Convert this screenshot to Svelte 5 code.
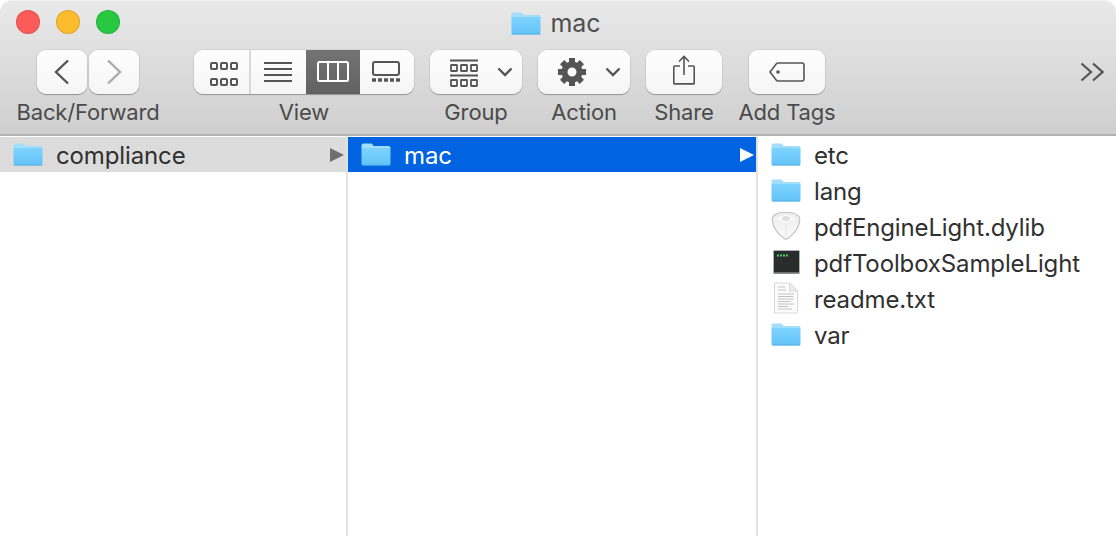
<script lang="ts">
  const viewModes = ['icons', 'list', 'columns', 'gallery'];
  const gearTeeth = [0, 45, 90, 135, 180, 225, 270, 315];
  const files = [
    { name: 'etc', kind: 'folder' },
    { name: 'lang', kind: 'folder' },
    { name: 'pdfEngineLight.dylib', kind: 'dylib' },
    { name: 'pdfToolboxSampleLight', kind: 'exec' },
    { name: 'readme.txt', kind: 'text' },
    { name: 'var', kind: 'folder' }
  ];
</script>

{#snippet folder()}
  <svg class="file-icon" width="30" height="26" viewBox="0 0 30 26">
    <defs>
      <linearGradient id="folderBody" x1="0" y1="0" x2="0" y2="1">
        <stop offset="0" stop-color="#7fd3fe" />
        <stop offset="1" stop-color="#62c3f8" />
      </linearGradient>
    </defs>
    <path d="M0.5 4.5a2 2 0 0 1 2-2h7.5c1.2 0 1.6 1.2 2.6 2.4h14.9a2 2 0 0 1 2 2v1H0.5z" fill="#a3def9" />
    <path d="M0.5 7h29v15.5a2 2 0 0 1-2 2h-25a2 2 0 0 1-2-2z" fill="url(#folderBody)" />
    <path d="M0.5 24h29" stroke="#4ea9dc" stroke-width="1" opacity="0.7" />
  </svg>
{/snippet}

{#snippet fileIcon(kind: string)}
  {#if kind === 'folder'}
    {@render folder()}
  {:else if kind === 'dylib'}
    <svg class="file-icon" width="30" height="30" viewBox="0 0 30 30">
      <defs>
        <linearGradient id="dylibBody" x1="0" y1="0" x2="0" y2="1">
          <stop offset="0" stop-color="#ececec" />
          <stop offset="1" stop-color="#fafafa" />
        </linearGradient>
      </defs>
      <path d="M9 1.500h12c1 0 5 2.500 6.500 3.500 1 .7 1.200 1.500 1.200 2.500 0 9-4 15-13.700 21-9.700-6-13.700-12-13.700-21 0-1 .2-1.800 1.200-2.500C3.500 4 8 1.500 9 1.500z" fill="url(#dylibBody)" stroke="#c6c6c6" stroke-width="1.200" />
      <path d="M15 3.500 24.500 7.500 15 12 5.500 7.500z" fill="#fdfdfd" />
      <path d="M11 6.200 15 4.800l4 1.400v2.600L15 10.400l-4-1.600z" fill="#dedede" />
      <path d="M15 12v14" stroke="#e6e6e6" stroke-width="1" />
    </svg>
  {:else if kind === 'exec'}
    <svg class="file-icon" width="27" height="24" viewBox="0 0 27 24">
      <rect x="0.500" y="0.500" width="26" height="23" rx="1" fill="#2a2b2b" stroke="#a9b0b0" />
      <rect x="1" y="22" width="25" height="1.500" fill="#6d7070" />
      <path d="M4 5.500h2M7 5.500h2M10 5.500h2M13 5.500h2" stroke="#46d36b" stroke-width="2" />
    </svg>
  {:else}
    <svg class="file-icon" width="26" height="32" viewBox="0 0 26 32">
      <path d="M1.500 1h15L24.500 9v22h-23z" fill="#fbfbfb" stroke="#d8d8d8" />
      <path d="M16.500 1v8h8z" fill="#ececec" stroke="#d8d8d8" />
      <path d="M5 5h7M5 8h8M5 12h16M5 14.500h15M5 17h16M5 19.500h13M5 22h16M5 24.500h10M5 27h14" stroke="#b4b4b4" stroke-width="0.800" />
    </svg>
  {/if}
{/snippet}

{#snippet viewIcon(mode: string)}
  {#if mode === 'icons'}
    <svg width="28" height="28" viewBox="0 0 28 28" fill="none" stroke="currentColor" stroke-width="2">
      {#each [1, 11, 21] as x}
        <rect x={x} y="5" width="6" height="6" rx="1" />
        <rect x={x} y="21" width="6" height="6" rx="1" />
      {/each}
    </svg>
  {:else if mode === 'list'}
    <svg width="28" height="24" viewBox="0 0 28 24" stroke="currentColor" stroke-width="2">
      <path d="M0 3h28M0 9h28M0 15h28M0 21h28" />
    </svg>
  {:else if mode === 'columns'}
    <svg width="32" height="22" viewBox="0 0 32 22" fill="none" stroke="currentColor" stroke-width="2">
      <rect x="1" y="1" width="30" height="19" rx="1.500" />
      <path d="M11 1v19M21 1v19" />
    </svg>
  {:else}
    <svg width="28" height="22" viewBox="0 0 28 22" fill="none" stroke="currentColor" stroke-width="2">
      <rect x="1" y="1" width="26" height="13" rx="2" />
      <path d="M0 19h4M6 19h4M12 19h4M18 19h4M24 19h4" stroke-width="3.500" />
    </svg>
  {/if}
{/snippet}

<div class="window">
  <header class="toolbar">
    <div class="title-row">
      <div class="lights">
        <span class="light red"></span>
        <span class="light yellow"></span>
        <span class="light green"></span>
      </div>
      <div class="title">
        {@render folder()}
        <span>mac</span>
      </div>
    </div>

    <div class="tools">
      <div class="tool nav">
        <div class="nav-buttons">
          <div class="btn nav-btn">
            <svg width="16" height="26" viewBox="0 0 16 26" fill="none" stroke="#555" stroke-width="2.400">
              <path d="M14 1.500 2 13l12 11.500" />
            </svg>
          </div>
          <div class="btn nav-btn">
            <svg width="16" height="26" viewBox="0 0 16 26" fill="none" stroke="#aaa" stroke-width="2.400">
              <path d="M2 1.500 14 13 2 24.500" />
            </svg>
          </div>
        </div>
        <span class="label">Back/Forward</span>
      </div>

      <div class="tool view">
        <div class="btn segments">
          {#each viewModes as mode}
            <div class="segment {mode}" class:active={mode === 'columns'}>
              {@render viewIcon(mode)}
            </div>
          {/each}
        </div>
        <span class="label">View</span>
      </div>

      <div class="tool group">
        <div class="btn drop">
          <svg width="28" height="30" viewBox="0 0 28 30" fill="none" stroke="#555" stroke-width="1.800">
            <path d="M0 3.500h28M0 18.500h28" />
            {#each [1, 11, 21] as x}
              <rect x={x} y="8" width="6" height="6" rx="0.500" />
              <rect x={x} y="23" width="6" height="6" rx="0.500" />
            {/each}
          </svg>
          <svg class="caret" width="16" height="10" viewBox="0 0 16 10" fill="none" stroke="#555" stroke-width="2.400">
            <path d="M1.500 1.500 8 8l6.500-6.500" />
          </svg>
        </div>
        <span class="label">Group</span>
      </div>

      <div class="tool action">
        <div class="btn drop">
          <svg width="28" height="28" viewBox="0 0 28 28" fill="#555">
            {#each gearTeeth as angle}
              <rect x="11" y="0" width="6" height="7" transform="rotate({angle} 14 14)" />
            {/each}
            <circle cx="14" cy="14" r="7.500" fill="none" stroke="#555" stroke-width="6" />
          </svg>
          <svg class="caret" width="16" height="10" viewBox="0 0 16 10" fill="none" stroke="#555" stroke-width="2.400">
            <path d="M1.500 1.500 8 8l6.500-6.500" />
          </svg>
        </div>
        <span class="label">Action</span>
      </div>

      <div class="tool share">
        <div class="btn">
          <svg width="22" height="30" viewBox="0 0 22 30" fill="none" stroke="#555" stroke-width="1.600">
            <path d="M7 11H1.500a.7.700 0 0 0-.7.700v16.500a.7.700 0 0 0 .7.700h19a.7.700 0 0 0 .7-.7V11.700a.7.700 0 0 0-.7-.7H15" />
            <path d="M11 20V1.500M6 6.500l5-5 5 5" />
          </svg>
        </div>
        <span class="label">Share</span>
      </div>

      <div class="tool tags">
        <div class="btn">
          <svg width="36" height="20" viewBox="0 0 36 20" fill="none" stroke="#555" stroke-width="1.600">
            <path d="M9 1h24a2 2 0 0 1 2 2v14a2 2 0 0 1-2 2H9a2 2 0 0 1-1.400-.6L1 10l6.600-8.400A2 2 0 0 1 9 1z" />
            <circle cx="9" cy="10" r="1.800" fill="#555" stroke="none" />
          </svg>
        </div>
        <span class="label">Add Tags</span>
      </div>

      <svg class="more" width="24" height="20" viewBox="0 0 24 20" fill="none" stroke="#555" stroke-width="2.200">
        <path d="M1.500 1.500 11 10l-9.500 8.500M13 1.500 22.500 10 13 18.500" />
      </svg>
    </div>
  </header>

  <main class="browser">
    <section class="column first">
      <div class="row parent">
        {@render folder()}
        <span class="name">compliance</span>
        <span class="arrow"></span>
      </div>
    </section>
    <section class="column second">
      <div class="row selected">
        {@render folder()}
        <span class="name">mac</span>
        <span class="arrow"></span>
      </div>
    </section>
    <section class="column third">
      {#each files as file}
        <div class="row">
          <span class="icon-slot">{@render fileIcon(file.kind)}</span>
          <span class="name">{file.name}</span>
        </div>
      {/each}
    </section>
  </main>
</div>

<style>
  :global(body) {
    margin: 0;
    background: #fff;
  }

  .window {
    width: 1116px;
    height: 536px;
    overflow: hidden;
    display: flex;
    flex-direction: column;
    font-family: Inter, "Liberation Sans", sans-serif;
    background: #fff;
  }

  .toolbar {
    height: 136px;
    box-sizing: border-box;
    flex-shrink: 0;
    border-radius: 12px 12px 0 0;
    border-bottom: 2px solid #b2b2b2;
    box-shadow: inset 0 1px 0 #f4f4f4;
    background: linear-gradient(#e9e9e9, #cfcfcf);
    color: #4b4b4b;
  }

  .title-row {
    height: 50px;
    display: grid;
    grid-template-columns: 1fr auto 1fr;
    align-items: start;
    padding-left: 16px;
    box-sizing: border-box;
  }

  .lights {
    display: flex;
    gap: 16px;
    padding-top: 10px;
  }

  .light {
    width: 24px;
    height: 24px;
    box-sizing: border-box;
    border-radius: 50%;
    border: 1px solid rgba(0, 0, 0, 0.12);
  }

  .red {
    background: #fd5b57;
  }

  .yellow {
    background: #fdbb2e;
  }

  .green {
    background: #28c941;
  }

  .title {
    display: flex;
    align-items: center;
    gap: 9px;
    height: 46px;
    font-size: 25px;
    margin-right: 20px;
    color: #4f4f4f;
  }

  .tools {
    display: flex;
    align-items: flex-start;
    padding-left: 17px;
    position: relative;
  }

  .tool {
    display: flex;
    flex-direction: column;
    align-items: center;
    gap: 5px;
  }

  .label {
    font-size: 22px;
    line-height: 27px;
    letter-spacing: -0.15px;
    white-space: nowrap;
  }

  .btn {
    height: 44px;
    box-sizing: border-box;
    display: flex;
    align-items: center;
    justify-content: center;
    border-radius: 9px;
    background: linear-gradient(#fefefe, #f5f5f5);
    box-shadow: 0 0 0 0.5px rgba(0, 0, 0, 0.1), 0 1px 1px rgba(0, 0, 0, 0.28);
  }

  .nav {
    width: 142px;
  }

  .nav-buttons {
    display: flex;
    gap: 2px;
  }

  .nav-btn {
    width: 50px;
  }

  .view {
    width: 220px;
    margin-left: 35px;
  }

  .segments {
    width: 220px;
    overflow: hidden;
    align-items: stretch;
    justify-content: flex-start;
    color: #555;
  }

  .segment {
    display: flex;
    align-items: center;
    justify-content: center;
    width: 54px;
    box-sizing: border-box;
  }

  .segment.icons {
    width: 57px;
    padding-left: 4px;
    border-right: 2px solid #d9d9d9;
  }

  .segment.list {
    width: 55px;
    padding-right: 1px;
  }

  .segment.gallery {
    padding-right: 2px;
  }

  .segment.active {
    background: linear-gradient(#737373, #616161);
    color: #fff;
  }

  .group,
  .action {
    width: 92px;
    margin-left: 16px;
  }

  .drop {
    width: 92px;
    justify-content: flex-start;
    gap: 19px;
    padding-left: 20px;
  }

  .caret {
    flex-shrink: 0;
  }

  .share {
    width: 76px;
    margin-left: 16px;
  }

  .share .btn {
    width: 76px;
    padding-bottom: 4px;
  }

  .tags {
    width: 76px;
    margin-left: 27px;
  }

  .tags .btn {
    width: 76px;
  }

  .more {
    position: absolute;
    left: 1080px;
    top: 12px;
  }

  .browser {
    flex: 1;
    display: grid;
    grid-template-columns: 348px 410px 1fr;
    min-height: 0;
  }

  .column {
    border-right: 2px solid #e2e2e2;
    box-sizing: border-box;
    min-width: 0;
  }

  .column.third {
    border-right: none;
  }

  .row {
    height: 36px;
    display: flex;
    align-items: center;
    gap: 13px;
    padding-left: 13px;
    font-size: 24px;
    color: #303030;
    position: relative;
  }

  .parent {
    background: #dcdcdc;
    box-shadow: inset 0 1px 0 #fff;
  }

  .selected {
    background: #0063e1;
    box-shadow: inset 0 1px 0 #fff;
    color: #fff;
  }

  .name {
    padding-top: 2px;
    letter-spacing: -0.13px;
    white-space: nowrap;
  }

  .icon-slot {
    width: 30px;
    height: 32px;
    flex-shrink: 0;
    display: flex;
    align-items: center;
    justify-content: center;
  }

  .file-icon {
    display: block;
    flex-shrink: 0;
  }

  .arrow {
    position: absolute;
    right: 2px;
    top: 12px;
    width: 0;
    height: 0;
    border-left: 14px solid #6f6f6f;
    border-top: 7px solid transparent;
    border-bottom: 7px solid transparent;
  }

  .selected .arrow {
    border-left-color: #fff;
  }
</style>
